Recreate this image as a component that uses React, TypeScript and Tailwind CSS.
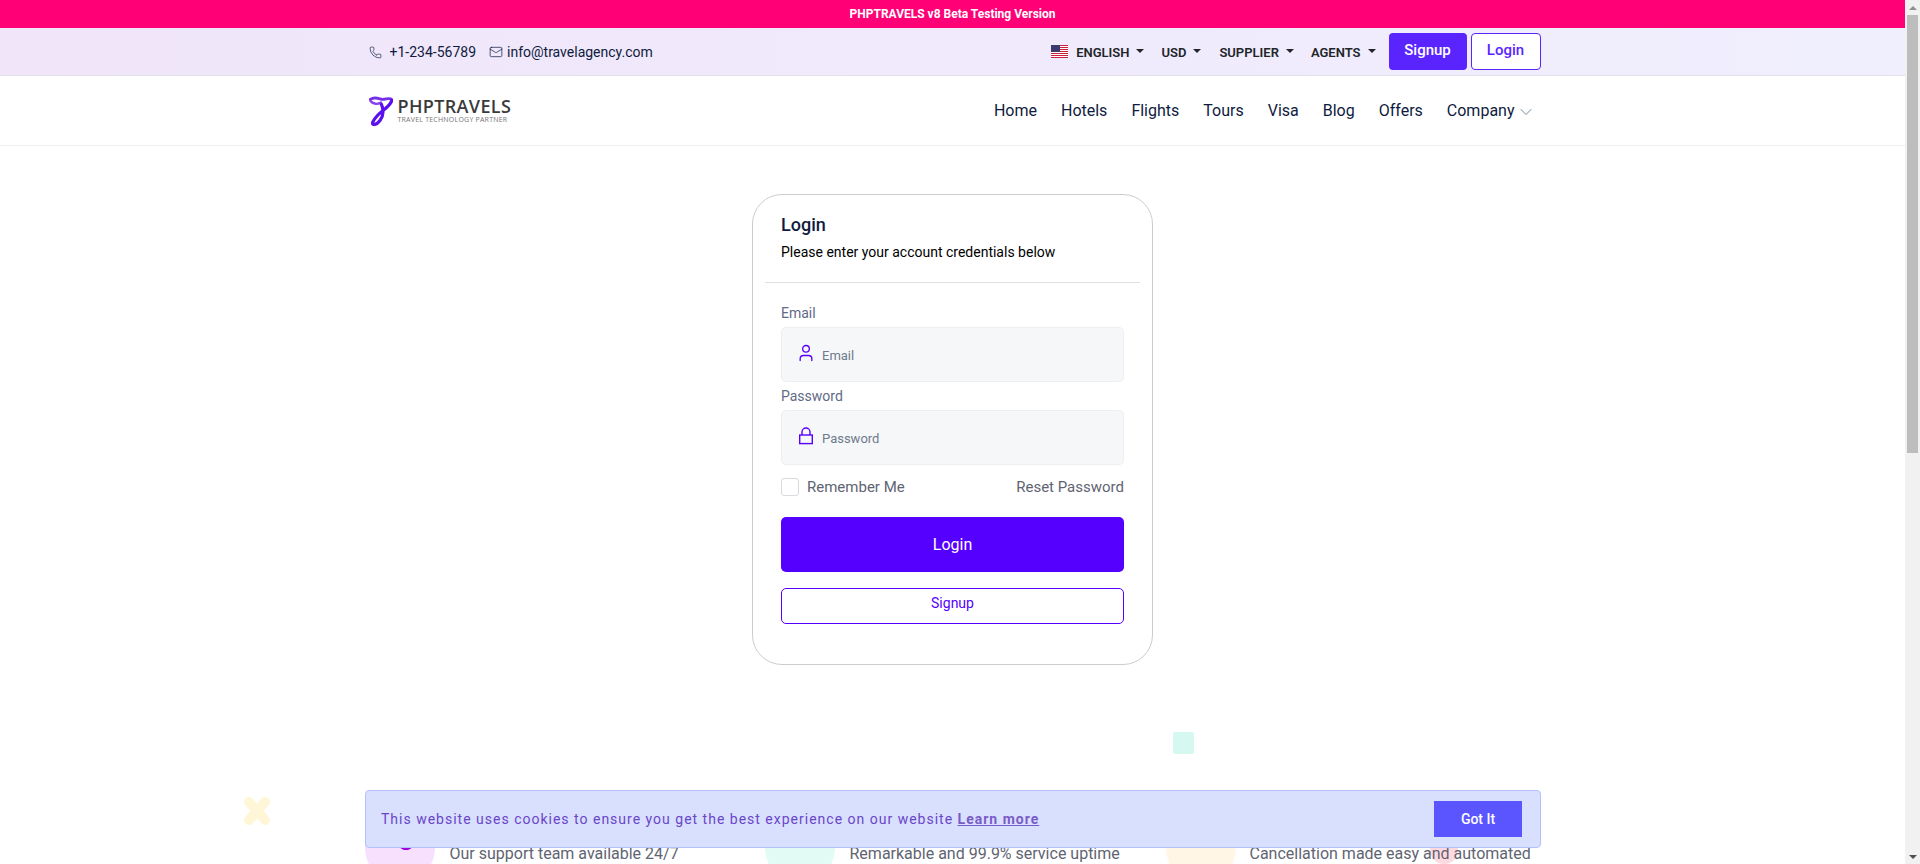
import { ChevronDown, Mail, Phone, User } from "lucide-react";

function Caret() {
  return <span className="ml-[7px] inline-block h-0 w-0 border-x-[4px] border-t-[4px] border-x-transparent border-t-[#212529] translate-y-[-1px]" />;
}

function Flag() {
  return (
    <svg width="17" height="13" viewBox="0 0 17 13" className="mr-[8px]">
      <rect width="17" height="13" fill="#fff" />
      {[0, 2, 4, 6, 8, 10, 12].map((y) => (
        <rect key={y} y={y} width="17" height="1" fill="#c8213f" />
      ))}
      <rect width="9" height="7" fill="#3c3b6e" />
    </svg>
  );
}

function LogoMark() {
  return (
    <svg width="24" height="30" viewBox="0 0 24 30" fill="none" strokeLinecap="round">
      <path d="M1.2 3.5C5 0.8 8 2 12 3.2C16 4.4 20 0.8 22.8 3.5" stroke="#7530e8" strokeWidth="2.8" />
      <path d="M1.5 5C4 8.5 9 8.5 12 6.5" stroke="#8a3ff0" strokeWidth="2.4" />
      <path d="M22.8 4.5C21 11 13 14 8 20C4 24.5 2 28.5 5 28.5C9 28.5 14 22 14 16C14 13 13.5 10.5 12.5 8.5" stroke="#5a10ee" strokeWidth="3.2" />
    </svg>
  );
}

function Feature({ circle, text, className, textClass, icon }: { circle: string; text: string; className: string; textClass: string; icon?: boolean }) {
  return (
    <div className={`flex items-start ${className}`}>
      <div className={`flex h-[70px] w-[70px] shrink-0 justify-center rounded-full ${circle}`}>
        {icon && (
          <svg width="18" height="8" viewBox="0 0 18 8" fill="none" className="ml-[12px] mt-[32px]">
            <path d="M4 1.5C6 4.5 12 4.5 14 1.5" stroke="#a200e0" strokeWidth="2.5" />
          </svg>
        )}
      </div>
      <p className={`mt-[31px] whitespace-nowrap text-[16px] leading-[20px] text-[#5f6472] ${textClass}`}>{text}</p>
    </div>
  );
}

export default function App() {
  return (
    <div className="relative flex h-screen overflow-hidden font-['Roboto',sans-serif]">
      <div className="h-screen min-w-0 flex-1 overflow-hidden bg-white">
        <div className="flex h-[28px] items-center justify-center bg-[#ff0077] text-[12px] font-bold text-white">
          PHPTRAVELS v8 Beta Testing Version
        </div>

        <div className="h-[48px] border-b border-[#e3e0ee] bg-gradient-to-r from-[#f0e5f9] to-[#f0effe]">
          <div className="mx-auto flex h-[47px] w-[1176px] items-center justify-between pl-[4px]">
            <div className="flex items-center pt-[1px] text-[14px] text-[#0f1b40]">
              <Phone size={13} strokeWidth={1.25} className="mr-[8px]" />
              <span>+1-234-56789</span>
              <Mail size={14} strokeWidth={1.25} className="ml-[13px] mr-[4px]" />
              <span>info@travelagency.com</span>
            </div>
            <div className="flex items-center text-[13px] font-semibold text-[#212529]">
              <Flag />
              <span className="translate-y-[1px]">ENGLISH</span>
              <Caret />
              <span className="ml-[17px] translate-y-[1px]">USD</span>
              <Caret />
              <span className="ml-[18px] translate-y-[1px]">SUPPLIER</span>
              <Caret />
              <span className="ml-[17px] translate-y-[1px]">AGENTS</span>
              <Caret />
              <div className="ml-[13px] flex h-[37px] w-[78px] items-center justify-center rounded-[4px] bg-[#5a24ff] pb-[3px] text-[15px] font-medium text-white">
                Signup
              </div>
              <div className="ml-[4px] flex h-[37px] w-[70px] items-center justify-center rounded-[4px] border border-[#5a24ff] bg-white pb-[3px] text-[15px] font-medium text-[#5a24ff]">
                Login
              </div>
            </div>
          </div>
        </div>

        <div className="h-[70px] border-b border-[#eeeeee] bg-white">
          <div className="mx-auto flex h-[69px] w-[1176px] items-center justify-between pl-[4px]">
            <div className="flex items-center">
              <LogoMark />
              <div className="ml-[5px] flex flex-col font-['Open_Sans',sans-serif] text-[#3a3a3a]">
                <span className="text-[18px] font-semibold leading-[17px] tracking-[0.35px]">PHPTRAVELS</span>
                <span className="text-[7px] leading-[9px] tracking-[0.22px] text-[#777]">TRAVEL TECHNOLOGY PARTNER</span>
              </div>
            </div>
            <nav className="flex items-center gap-[24px] pr-[5px] text-[16px] text-[#0f1b40]">
              <span>Home</span>
              <span>Hotels</span>
              <span>Flights</span>
              <span>Tours</span>
              <span>Visa</span>
              <span>Blog</span>
              <span>Offers</span>
              <span className="flex items-center">
                Company
                <ChevronDown size={20} strokeWidth={1} className="ml-[1px] mt-[3px] text-[#5a7080]" />
              </span>
            </nav>
          </div>
        </div>

        <main className="relative flex flex-col items-center">
          <div className="mt-[48px] h-[471px] w-[401px] rounded-[30px] border border-[#cccccc] bg-white px-[12px]">
            <div className="h-[88px] border-b border-[#dfe0e6] px-[16px] pt-[19px]">
              <h1 className="text-[18px] font-medium leading-[22px] text-[#0f1b40]">Login</h1>
              <p className="mt-[6px] text-[14px] leading-[20px] text-black">Please enter your account credentials below</p>
            </div>
            <div className="px-[16px]">
              <label className="mt-[20px] block text-[14px] leading-[20px] text-[#5f6a88]">Email</label>
              <div className="mt-[4px] flex h-[55px] items-center rounded-[5px] border border-[#eceef2] bg-[#f6f7f9] pl-[14px] text-[#6f7a8c]">
                <User size={20} strokeWidth={1.6} className="mt-[-3px] text-[#5a00ff]" />
                <span className="ml-[6px] pt-[3px] text-[13px]">Email</span>
              </div>
              <label className="mt-[4px] block text-[14px] leading-[20px] text-[#5f6a88]">Password</label>
              <div className="mt-[4px] flex h-[55px] items-center rounded-[5px] border border-[#eceef2] bg-[#f6f7f9] pl-[14px] text-[#6f7a8c]">
                <svg width="20" height="20" viewBox="0 0 20 20" fill="none" stroke="#5a00ff" strokeWidth="1.4" className="mt-[-3px]">
                  <rect x="3.7" y="9" width="12.6" height="8.6" />
                  <path d="M6 9V6a4 4 0 0 1 8 0v3" />
                </svg>
                <span className="ml-[6px] pt-[3px] text-[13px]">Password</span>
              </div>
              <div className="mt-[12px] flex items-center justify-between text-[15px] leading-[20px] text-[#5f6472]">
                <div className="flex items-center">
                  <span className="h-[18px] w-[18px] rounded-[3px] border border-[#d8dae0] bg-white" />
                  <span className="ml-[8px]">Remember Me</span>
                </div>
                <span>Reset Password</span>
              </div>
              <div className="mt-[20px] flex h-[55px] items-center justify-center rounded-[5px] bg-[#5500ff] text-[16px] text-white">Login</div>
              <div className="mt-[16px] flex h-[36px] items-start justify-center rounded-[5px] border border-[#5500ff] pt-[4px] text-[14px] leading-[20px] text-[#5500ff]">Signup</div>
            </div>
          </div>

          <svg width="28" height="28" viewBox="0 0 28 28" className="absolute left-[243px] top-[651px]" fill="none" stroke="#fff6d8" strokeWidth="10" strokeLinecap="round">
            <path d="M6 5L22 23M22 5L6 23" />
          </svg>
          <div className="absolute left-[1173px] top-[586px] h-[22px] w-[21px] rounded-[2px] bg-[#d5f9f1]" />
          <div className="absolute left-[1430px] top-[678px] h-[40px] w-[28px] rounded-full bg-[#ffd9e0]" />

          <div className="relative mt-[148px] flex w-[1176px]">
            <Feature circle="bg-[#f6e0fd]" text="Our support team available 24/7" className="w-[400px]" textClass="ml-[15px]" icon />
            <Feature circle="bg-[#e2fbf5]" text="Remarkable and 99.9% service uptime" className="w-[401px]" textClass="ml-[15px]" />
            <Feature circle="bg-[#fff6e6]" text="Cancellation made easy and automated" className="" textClass="ml-[14px]" />
          </div>
        </main>
      </div>

      <aside className="flex h-screen w-[15px] shrink-0 flex-col bg-[#f1f1f1]">
        <div className="flex h-[15px] items-center justify-center">
          <span className="h-0 w-0 border-x-[4px] border-b-[4px] border-x-transparent border-b-[#8f8f8f]" />
        </div>
        <div className="mx-[2px] h-[438px] bg-[#bdbdbd]" />
        <div className="flex-1" />
        <div className="flex h-[15px] items-center justify-center">
          <span className="h-0 w-0 border-x-[4px] border-t-[4px] border-x-transparent border-t-[#505050]" />
        </div>
      </aside>

      <div className="fixed bottom-[16px] left-[365px] flex h-[58px] w-[1176px] items-center justify-between rounded-[4px] border border-[#b4c0fb] bg-[#d8e0fd] pl-[15px] pr-[18px] text-[14px] tracking-[1px] text-[#6a45c9]">
        <p>
          This website uses cookies to ensure you get the best experience on our website{" "}
          <span className="font-bold text-[#7a5bc8] underline">Learn more</span>
        </p>
        <div className="flex h-[36px] w-[88px] items-center justify-center bg-[#5a55ff] text-[14px] font-medium tracking-normal text-white">Got It</div>
      </div>
    </div>
  );
}
